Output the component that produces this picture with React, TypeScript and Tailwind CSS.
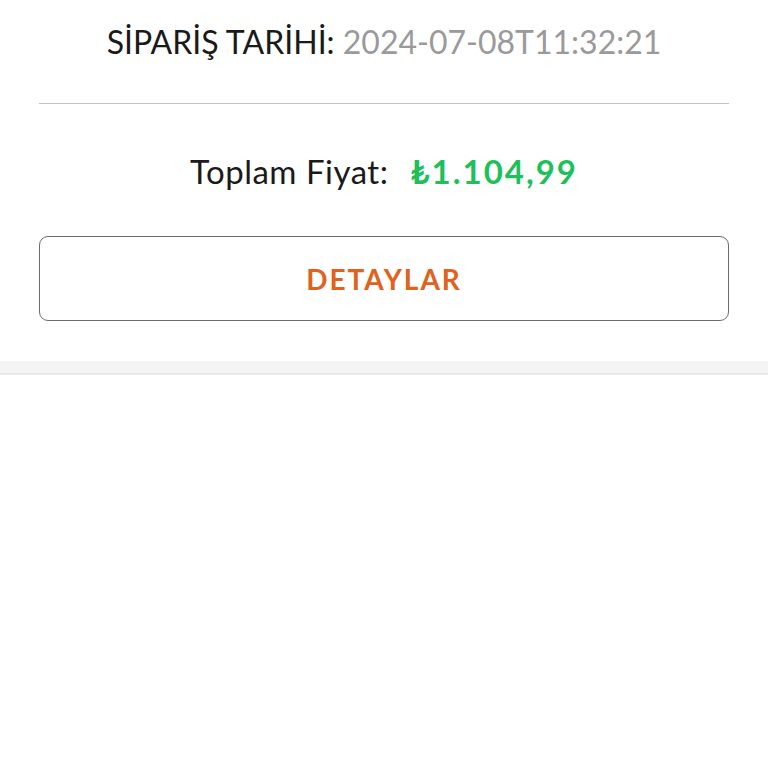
export default function App() {
  return (
    <div className="min-h-[768px] bg-white font-['Lato','Open_Sans',sans-serif]">
      <div className="px-[39px] pt-[22px] pb-[40px]">
        <div className="text-center text-[32px] leading-[40px]">
          <span className="text-[#1a1a1a]">SİPARİŞ TARİHİ: </span>
          <span className="text-[#9a9a9a]">2024-07-08T11:32:21</span>
        </div>

        <div className="mt-[41px] h-px bg-[#c2c2c2]" />

        <div className="mt-[47px] flex items-center justify-center gap-[22px] text-[33px] leading-[40px]">
          <span className="tracking-[0.5px] text-[#1a1a1a]">Toplam Fiyat:</span>
          <span className="font-bold tracking-[2px] text-[#1fbf5c]">₺1.104,99</span>
        </div>

        <button className="mt-[45px] flex h-[85px] w-full items-center justify-center rounded-[9px] border border-[#6b6b6b] bg-white">
          <span className="text-[28px] font-bold tracking-[2px] text-[#e0621c]">DETAYLAR</span>
        </button>
      </div>

      <div className="h-[14px] border-b-2 border-[#e8e8e8] bg-[#f4f4f4]" />
    </div>
  );
}
